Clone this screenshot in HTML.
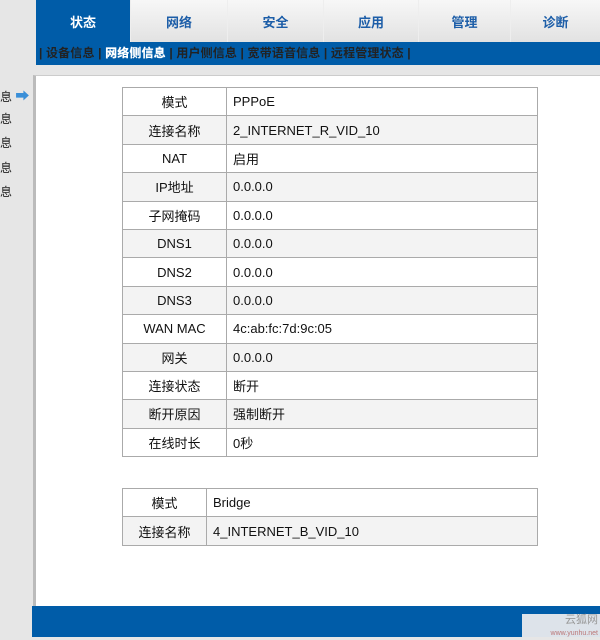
<!DOCTYPE html>
<html><head><meta charset="utf-8"><style>
*{margin:0;padding:0;box-sizing:border-box}
body{width:600px;height:637px;overflow:hidden;background:#e6e6e6;font-family:Tahoma,"Liberation Sans","Noto Sans CJK SC",sans-serif;position:relative}
.tabs{position:absolute;top:0;left:36px;right:0;height:42px;display:flex}
.tab{height:42px;display:flex;align-items:center;justify-content:center;font-size:13px;font-weight:bold;color:#1d5ea8;background:linear-gradient(#f7f7f7,#e2e2e2);border-left:1px solid #eee}
.tab.on{background:#005ca8;color:#fff;border:none}
.sub{position:absolute;top:42px;left:36px;right:0;height:23px;background:#005ca8;color:#222;font-size:12px;line-height:23px;padding-left:3px;font-weight:bold;letter-spacing:0.15px}
.sub b{color:#fff}
.panel{position:absolute;top:75px;left:33px;right:0;height:531px;background:#fff;border-left:3px solid #bbb;border-top:1px solid #ccc}
.foot{position:absolute;top:606px;left:32px;right:0;height:31px;background:#005ca8}
.side{position:absolute;left:0;font-size:12px;color:#222}
table{position:absolute;left:122px;width:416px;border-collapse:collapse;font-size:13px;color:#111}
td{border:1px solid #aaa;height:28.4px;padding-left:6px}
td:first-child{text-align:center;padding:0}
tr:nth-child(even){background:#f3f3f3}
</style></head><body>
<div class="tabs">
<div class="tab on" style="width:94px">状态</div>
<div class="tab" style="width:97px">网络</div>
<div class="tab" style="width:96px">安全</div>
<div class="tab" style="width:95px">应用</div>
<div class="tab" style="width:92px">管理</div>
<div class="tab" style="width:90px">诊断</div>
</div>
<div class="sub">| 设备信息 | <b>网络侧信息</b> | 用户侧信息 | 宽带语音信息 | 远程管理状态 |</div>
<div class="side" style="top:86px">息 <span style="color:#3a8fd8;font-size:14px">➡</span></div>
<div class="side" style="top:110px">息</div>
<div class="side" style="top:134px">息</div>
<div class="side" style="top:159px">息</div>
<div class="side" style="top:183px">息</div>
<div class="panel"></div>
<table style="top:87px">
<col style="width:104px"><col>
<tr><td>模式</td><td>PPPoE</td></tr>
<tr><td>连接名称</td><td>2_INTERNET_R_VID_10</td></tr>
<tr><td>NAT</td><td>启用</td></tr>
<tr><td>IP地址</td><td>0.0.0.0</td></tr>
<tr><td>子网掩码</td><td>0.0.0.0</td></tr>
<tr><td>DNS1</td><td>0.0.0.0</td></tr>
<tr><td>DNS2</td><td>0.0.0.0</td></tr>
<tr><td>DNS3</td><td>0.0.0.0</td></tr>
<tr><td>WAN MAC</td><td>4c:ab:fc:7d:9c:05</td></tr>
<tr><td>网关</td><td>0.0.0.0</td></tr>
<tr><td>连接状态</td><td>断开</td></tr>
<tr><td>断开原因</td><td>强制断开</td></tr>
<tr><td>在线时长</td><td>0秒</td></tr>
</table>
<table style="top:488px">
<col style="width:84px"><col>
<tr><td>模式</td><td>Bridge</td></tr>
<tr><td>连接名称</td><td>4_INTERNET_B_VID_10</td></tr>
</table>
<div class="foot"><div style="position:absolute;right:0;top:8px;width:78px;height:23px;background:#dde3ea;font-size:11px;color:#999;text-align:right;padding-right:2px;line-height:12px">云狐网<br><span style="font-size:7px;color:#b77">www.yunhu.net</span></div></div>
</body></html>
